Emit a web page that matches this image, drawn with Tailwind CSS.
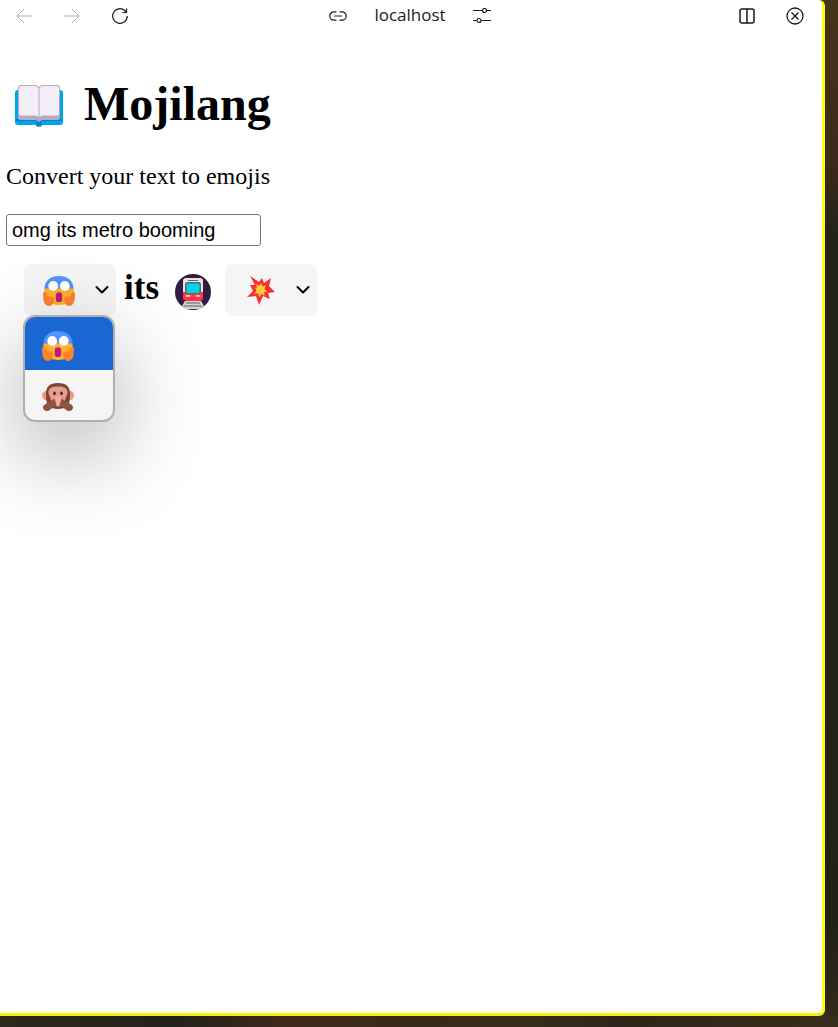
<!DOCTYPE html>
<html lang="en">
<head>
<meta charset="utf-8">
<title>Mojilang</title>
<script src="https://cdn.jsdelivr.net/npm/@tailwindcss/browser@4"></script>
</head>
<body class="flex min-h-screen flex-col bg-[linear-gradient(#46331b,#3b291b_16%,#232319_23%,#232218_60%,#1f2119_90%,#35291a)] pr-[13px]">
<svg width="0" height="0" class="absolute" aria-hidden="true">
  <defs>
    <symbol id="scream" viewBox="0 0 32 32">
      <path d="M1.500 14C1.500 5 8 1 16 1s14.500 4 14.500 13v1h-29Z" fill="#5092ff"/>
      <path d="M1.500 13.500h29v4c0 8-6 12.500-14.500 12.500S1.500 25.500 1.500 17.500Z" fill="#ffb02e"/>
      <circle cx="10.200" cy="11" r="4.900" fill="#fff"/><circle cx="21.800" cy="11" r="4.900" fill="#fff"/>
      <rect x="12.800" y="17.300" width="6.400" height="9.800" rx="3.200" fill="#bb1d80"/>
      <path d="M0 18.500c0-2 3-2.500 3.500 0 .3 1.500 1 2.500 2 3.500 3-1.500 6.500.5 5.500 3.500L9.500 29c-1.500 2.500-5.500 2.500-7.500 0C.5 27 0 23 0 18.500ZM32 18.500c0-2-3-2.500-3.500 0-.3 1.500-1 2.500-2 3.500-3-1.500-6.500.5-5.500 3.500l1.500 3.500c1.500 2.500 5.500 2.500 7.500 0 1.500-2 2-6 2-10.500Z" fill="#ff822d"/>
    </symbol>
    <symbol id="chevron" viewBox="0 0 14 10"><path d="M1.500 2 7 7.500 12.500 2" fill="none" stroke="#000" stroke-width="2" stroke-linecap="round" stroke-linejoin="round"/></symbol>
  </defs>
</svg>
<div class="flex grow flex-col rounded-r-md border-r-3 border-b-3 border-r-[#ffff00] border-b-[#f5f000] bg-white">
  <header class="grid h-8 grid-cols-3 items-center pr-[18px] pl-4 text-[#1b1b1b]">
    <div class="flex items-center gap-8 text-[#adadad]">
      <button aria-label="Back"><svg class="block size-4" viewBox="0 0 16 16" fill="none" stroke="currentColor"><path d="M16 8H1M8 1 1 8l7 7"/></svg></button>
      <button aria-label="Forward"><svg class="block size-4" viewBox="0 0 16 16" fill="none" stroke="currentColor"><path d="M0 8h15M8 1l7 7-7 7"/></svg></button>
      <button aria-label="Reload" class="text-[#1b1b1b]"><svg class="block size-4" viewBox="0 0 16 16" fill="none" stroke="currentColor" stroke-width="1.200"><path d="M15.300 8A7.300 7.300 0 1 1 13 2.700L14.500 4.500M14.500.5v4h-4"/></svg></button>
    </div>
    <div class="flex items-center justify-center gap-[27px]">
      <svg class="h-2.5 w-[18px]" viewBox="0 0 18 10" fill="none" stroke="currentColor" stroke-width="1.200" stroke-linecap="round"><path d="M7 .8H5a4.200 4.200 0 0 0 0 8.400h2M11 .8h2a4.200 4.200 0 0 1 0 8.400h-2M5.500 5h7"/></svg>
      <span class="-mt-0.5 font-['Open_Sans',sans-serif] text-[17px] leading-6">localhost</span>
      <button aria-label="Site settings"><svg class="block h-4 w-[18px]" viewBox="0 0 18 16" fill="none" stroke="currentColor" stroke-width="1.200"><path d="M0 2.500h9m5 0h4M0 12.500h3.500m5 0H18"/><circle cx="11.500" cy="2.500" r="2"/><circle cx="6" cy="12.500" r="2"/></svg></button>
    </div>
    <div class="flex items-center justify-end gap-[31px]">
      <button aria-label="Split screen"><svg class="block size-4" viewBox="0 0 16 16" fill="none" stroke="currentColor" stroke-width="1.500"><rect x="1" y="1" width="14" height="14" rx="2"/><path d="M8 1v14"/></svg></button>
      <button aria-label="Close"><svg class="block size-[18px]" viewBox="0 0 18 18" fill="none" stroke="currentColor" stroke-width="1.300"><circle cx="9" cy="9" r="8"/><path d="m5.500 5.500 7 7m0-7-7 7"/></svg></button>
    </div>
  </header>
  <main class="px-1.5 pt-11 font-['Liberation_Serif',serif] text-black">
    <h1 class="flex items-center pl-2 text-5xl leading-14 font-bold">
      <svg class="mt-1 mr-5 h-12 w-[50px]" viewBox="0 0 50 48" role="img" aria-label="Open book">
        <path d="M1 11q0-3 3-3h42q3 0 3 3v29q0 3-3 3H28q0 1.500-3 1.500T22 43H4q-3 0-3-3Z" fill="#00a6ed"/>
        <path d="M2 37h46v2H28v3q0 2.500-3 2.500T22 42v-3H2Z" fill="#0084ce"/>
        <path d="M4 6q0-3 3-3h14q3 0 4 2 1-2 4-2h14q3 0 3 3v29q0 3-3 3H29q-2 0-4 2-2-2-4-2H7q-3 0-3-3Z" fill="#b4acbc"/>
        <path d="M5 6.500Q5 4 7.500 4H21q3 0 3.500 3v28q-1-1.500-3.500-1.500H7q-2 0-2-2ZM25.500 7Q26 4 29 4h13.500Q45 4 45 6.500v25q0 2-2 2H29q-2 0-3.500 1.500Z" fill="#f3eef8"/>
      </svg>
      <span>Mojilang</span>
    </h1>
    <p class="mt-[30px] text-2xl leading-7">Convert your text to emojis</p>
    <input type="text" aria-label="Text to convert" value="omg its metro booming" class="mt-6 block h-8 w-[255px] rounded-[3px] border border-[#767676] bg-white px-[5px] font-['Liberation_Sans',sans-serif] text-xl">
    <div class="mt-[18px] ml-[18px] flex h-[52px] items-center text-4xl font-bold">
      <div class="relative h-[52px] w-[92px]">
        <select aria-label="Emoji for omg" class="size-full appearance-none rounded-lg bg-[#f5f5f5] text-transparent"><option>scream</option><option>monkey</option></select>
        <svg class="pointer-events-none absolute top-[11px] left-[19px] size-8"><use href="#scream"/></svg>
        <svg class="pointer-events-none absolute top-[21px] right-[7px] h-2.5 w-3.5"><use href="#chevron"/></svg>
        <div role="listbox" aria-label="Emoji choices for omg" class="absolute top-full -left-px -mt-px w-[92px] overflow-hidden rounded-xl border-2 border-[#afafaf] bg-[#f5f5f5] shadow-[0_30px_90px_rgba(0,0,0,0.33)]">
          <button role="option" aria-selected="true" aria-label="Scream" class="block h-[53px] w-full bg-[#1967d2] pt-1 pl-[17px]"><svg class="size-8"><use href="#scream"/></svg></button>
          <button role="option" aria-selected="false" aria-label="Monkey" class="block h-[50px] w-full pt-1 pl-[17px]">
            <svg class="size-8" viewBox="0 0 32 30">
              <ellipse cx="4" cy="13.500" rx="4" ry="4.500" fill="#e39d89"/><ellipse cx="28" cy="13.500" rx="4" ry="4.500" fill="#e39d89"/>
              <path d="M4 15C3 4 8 1 16 1s13 3 12 14c0 8-4 12-12 12S4 23 4 15Z" fill="#7d4533"/>
              <path d="M6.500 10.500C6.500 6 10 4.500 16 4.500s9.500 1.500 9.500 6c0 3-2 4-2 6 0 3-3 4-7.500 4s-7.500-1-7.500-4c0-2-2-3-2-6Z" fill="#e39d89"/>
              <ellipse cx="12.500" cy="11.300" rx="1.100" ry="1.900" fill="#1c1c1c"/><ellipse cx="19.500" cy="11.300" rx="1.100" ry="1.900" fill="#1c1c1c"/>
              <path d="M12 17.500c.5-2 2.500-3 4.500-3s3.500 1.500 3 3.500l-2 6.500c-3 0-5-1.500-5.500-4Z" fill="#f7a99a"/>
              <path d="M12.500 16.500 14.500 23 7 28.500c-4 2-8-2-5-5.500Z" fill="#8c5543"/>
              <path d="M19.500 16.500 17.500 23l7.500 5.500c4 2 8-2 5-5.500Z" fill="#8c5543"/>
            </svg>
          </button>
        </div>
      </div>
      <span class="mx-2 -mt-1 text-[35px]">its</span>
      <svg class="mt-1 ml-2 size-9" viewBox="0 0 36 36" role="img" aria-label="Metro">
        <circle cx="18" cy="18" r="18" fill="#321b41"/>
        <path d="M7 32 10 27h16l3 5-4 3H11Z" fill="#d3d3d3"/><path d="M11 29h14m-16 3h18" stroke="#636363" stroke-width="1"/>
        <path d="M8 7q0-3 3-3h14q3 0 3 3v13H8Z" fill="#e6e6e6"/>
        <path d="M13 6.500h10" stroke="#636363"/>
        <path d="M8 18h20v6q0 3-4 3H12q-4 0-4-3Z" fill="#ff2e5d"/>
        <rect x="10" y="8" width="16" height="12" rx="2.500" fill="#636363"/><rect x="11.500" y="9.500" width="13" height="9.500" rx="1.500" fill="#00d3ed"/>
        <rect x="10.500" y="21" width="5" height="2" rx="1" fill="#ffd83b"/><rect x="20.500" y="21" width="5" height="2" rx="1" fill="#ffd83b"/>
      </svg>
      <div class="relative ml-3.5 h-[52px] w-[92px]">
        <select aria-label="Emoji for booming" class="size-full appearance-none rounded-lg bg-[#f5f5f5] text-transparent"><option>collision</option></select>
        <svg class="pointer-events-none absolute top-3 left-[22px] h-[29px] w-7" viewBox="0 0 28 29"><path d="m3 0 9 6L15 2l2 5 7-5-2 8 6 6-7 1 2 6-7-3-4 9-3-9-9 1 6-6-3-6 5 0Z" fill="#f92f2f"/><path d="m9 8 3.500 2L14 7l1.500 3.500L19 9l-1.500 4 3 2.500-3.500 1 .5 3.500-3-2-2 3.500-1.500-4-4 0 2.500-3L8 12l2-.5Z" fill="#ffc83d"/></svg>
        <svg class="pointer-events-none absolute top-[21px] right-[7px] h-2.5 w-3.5"><use href="#chevron"/></svg>
      </div>
    </div>
  </main>
</div>
<div class="-mr-[13px] h-[11px] bg-[linear-gradient(90deg,#2c281c,#23211c_21%,#3f291b_34%,#38291a_50%,#382e1b_62%,#2f241b_74%,#382d19)]"></div>
</body>
</html>
